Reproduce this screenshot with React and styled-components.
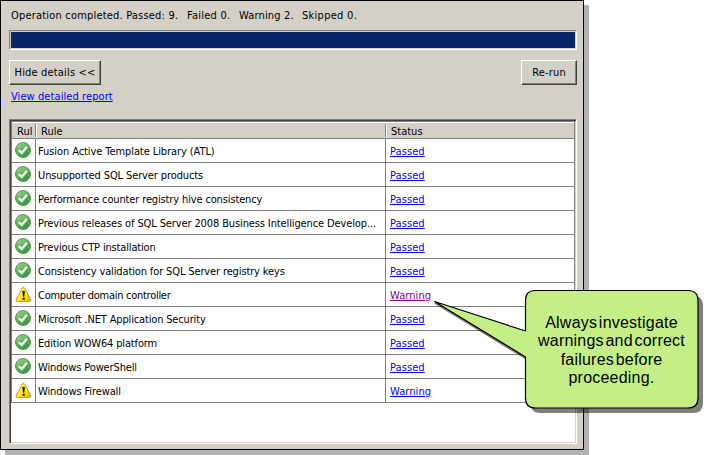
import React from 'react';
import styled, { createGlobalStyle } from 'styled-components';

const GlobalStyle = createGlobalStyle`
  * { box-sizing: border-box; }
  body { margin: 0; background: #fff; overflow: hidden; }
`;

const Page = styled.main`
  position: relative;
  width: 713px;
  height: 455px;
  font: 11px/15px "DejaVu Sans Condensed", "DejaVu Sans", sans-serif;
  color: #000;
`;

const Dialog = styled.section`
  display: flex;
  flex-direction: column;
  width: 584px;
  height: 450px;
  padding: 7px 6px 5px 8px;
  border: 1px solid #000;
  background: #d4d0c8;
  box-shadow: 5px 5px 0 #b2b2b2;
`;

const Summary = styled.div`
  display: flex;
  height: 22px;
  padding-left: 2px;
`;

const SummaryItem = styled.span`
  flex: none;
  width: ${(p) => p.$width}px;
  white-space: nowrap;
  letter-spacing: ${(p) => p.$spacing}px;
`;

const Progress = styled.div`
  height: 20px;
  padding: 1px;
  border: 1px solid;
  border-color: #808080 #fff #fff #808080;
`;

const ProgressFill = styled.div`
  height: 100%;
  background: #0a246a;
`;

const Actions = styled.div`
  display: flex;
  justify-content: space-between;
  margin-top: 10px;
`;

const Button = styled.button`
  width: ${(p) => p.$width}px;
  height: 25px;
  padding: 0 0 1px;
  border: 1px solid;
  border-color: #fff #404040 #404040 #fff;
  box-shadow: inset -1px -1px 0 #808080;
  background: #d4d0c8;
  color: #000;
  font: inherit;
  letter-spacing: 0.17px;
  white-space: nowrap;
`;

const Link = styled.a`
  color: ${(p) => (p.$visited ? '#800080' : '#0000ff')};
  letter-spacing: 0.08px;
  text-decoration: underline;
  text-decoration-thickness: 1px;
  text-underline-offset: 1px;
`;

const ReportLine = styled.div`
  height: 34px;
  padding: 4px 0 0 2px;
  letter-spacing: 0.1px;
`;

const Grid = styled.div`
  width: 568px;
  height: 325px;
  padding: 1px;
  border: 1px solid;
  border-color: #808080 #fff #fff #808080;
  background: #fff;
  box-shadow: inset 1px 1px 0 #404040, inset -1px -1px 0 #d4d0c8;
`;

const columns = '23px 350px 1fr';

const Header = styled.div`
  display: grid;
  grid-template-columns: ${columns};
  height: 18px;
  border: 1px solid #808080;
  box-shadow: inset 0 1px 0 #fff;
  background: #d4d0c8;
`;

const HeaderCell = styled.div`
  height: 13px;
  margin-top: 2px;
  padding-left: 5px;
  overflow: hidden;
  line-height: 15px;
  white-space: nowrap;
  border-left: ${(p) => (p.$divided ? '1px solid #808080' : '0')};
  box-shadow: ${(p) => (p.$divided ? 'inset 1px 0 0 #fff' : 'none')};
`;

const Row = styled.div`
  display: grid;
  grid-template-columns: ${columns};
  height: 24px;
  border: solid #808080;
  border-width: 0 1px 1px 1px;
`;

const IconCell = styled.div`
  display: flex;
  padding: 3px 0 0 3px;
`;

const Cell = styled.div`
  height: 23px;
  padding-left: ${(p) => (p.$status ? 4 : 2)}px;
  border-left: 1px solid #808080;
  line-height: 26px;
  letter-spacing: ${(p) => p.$spacing || 0}px;
  white-space: nowrap;
`;

const Callout = styled.aside`
  position: absolute;
  left: 430px;
  top: 286px;
  width: 278px;
  height: 130px;
`;

const Bubble = styled.svg`
  position: absolute;
  inset: 0;
`;

const CalloutText = styled.p`
  position: absolute;
  left: 95px;
  top: 28px;
  width: 173px;
  margin: 0;
  text-align: center;
  font: 16px/18.3px "Liberation Sans", Arial, sans-serif;
  letter-spacing: 0.22px;
  word-spacing: -3px;
`;

const Line = styled.span`
  display: block;
  white-space: nowrap;
`;

function PassedIcon() {
  return (
    <svg width="16" height="16" viewBox="0 0 16 16" aria-label="Passed">
      <defs>
        <linearGradient id="green" x1="0.1" y1="0" x2="0.7" y2="1">
          <stop offset="0" stopColor="#a9d8a0" />
          <stop offset="0.5" stopColor="#62b35d" />
          <stop offset="1" stopColor="#35943a" />
        </linearGradient>
      </defs>
      <circle cx="8" cy="8" r="7.5" fill="url(#green)" stroke="#4d8a50" strokeWidth="0.9" />
      <path d="M4 8.200 L6.700 11 L12 4.800" fill="none" stroke="#fff" strokeWidth="2.1" />
    </svg>
  );
}

function WarningIcon() {
  return (
    <svg width="17" height="17" viewBox="0 0 17 17" aria-label="Warning">
      <defs>
        <linearGradient id="yellow" x1="0" y1="0" x2="1" y2="1">
          <stop offset="0" stopColor="#fff780" />
          <stop offset="0.55" stopColor="#ffe612" />
          <stop offset="1" stopColor="#e0b000" />
        </linearGradient>
      </defs>
      <path
        d="M8.500 1.100 Q9.200 1.100 9.700 2.100 L15.800 13.600 Q16.300 15.400 15 15.500 H2 Q0.700 15.400 1.200 13.600 L7.300 2.100 Q7.800 1.100 8.500 1.100Z"
        fill="url(#yellow)"
        stroke="#b99b18"
        strokeWidth="0.9"
      />
      <path d="M7.300 5 H9.900 L9.200 10.800 H8 Z" fill="#181400" />
      <rect x="7.600" y="11.800" width="2" height="2" fill="#181400" />
    </svg>
  );
}

const summary = [
  { text: 'Operation completed. Passed: 9.', width: 176, spacing: 0.19 },
  { text: 'Failed 0.', width: 52, spacing: 0.25 },
  { text: 'Warning 2.', width: 63, spacing: 0.15 },
  { text: 'Skipped 0.', width: 60, spacing: 0.28 },
];

const rules = [
  { name: 'Fusion Active Template Library (ATL)', status: 'Passed', spacing: -0.08 },
  { name: 'Unsupported SQL Server products', status: 'Passed', spacing: -0.11 },
  { name: 'Performance counter registry hive consistency', status: 'Passed', spacing: -0.14 },
  {
    name: 'Previous releases of SQL Server 2008 Business Intelligence Develop...',
    status: 'Passed',
    spacing: -0.12,
  },
  { name: 'Previous CTP installation', status: 'Passed', spacing: -0.16 },
  { name: 'Consistency validation for SQL Server registry keys', status: 'Passed', spacing: -0.13 },
  { name: 'Computer domain controller', status: 'Warning', spacing: -0.28, visited: true },
  { name: 'Microsoft .NET Application Security', status: 'Passed', spacing: -0.16 },
  { name: 'Edition WOW64 platform', status: 'Passed', spacing: -0.16 },
  { name: 'Windows PowerShell', status: 'Passed', spacing: -0.13 },
  { name: 'Windows Firewall', status: 'Warning', spacing: -0.1 },
];

const bubblePath =
  'M105.5 4.5 H258 Q268 4.5 268 14.5 V112 Q268 122 258 122 H105.5 Q95.5 122 95.5 112 V71 L4.5 15.5 L95.5 45 V14.5 Q95.5 4.5 105.5 4.5Z';

export default function App() {
  return (
    <>
      <GlobalStyle />
      <Page>
        <Dialog>
          <Summary>
            {summary.map((s) => (
              <SummaryItem key={s.text} $width={s.width} $spacing={s.spacing}>
                {s.text}
              </SummaryItem>
            ))}
          </Summary>
          <Progress>
            <ProgressFill />
          </Progress>
          <Actions>
            <Button $width={92}>Hide details &lt;&lt;</Button>
            <Button $width={56}>Re-run</Button>
          </Actions>
          <ReportLine>
            <Link>View detailed report</Link>
          </ReportLine>
          <Grid>
            <Header>
              <HeaderCell>Rul</HeaderCell>
              <HeaderCell $divided>Rule</HeaderCell>
              <HeaderCell $divided>Status</HeaderCell>
            </Header>
            {rules.map((r) => (
              <Row key={r.name}>
                <IconCell>{r.status === 'Passed' ? <PassedIcon /> : <WarningIcon />}</IconCell>
                <Cell $spacing={r.spacing}>{r.name}</Cell>
                <Cell $status>
                  <Link $visited={r.visited}>{r.status}</Link>
                </Cell>
              </Row>
            ))}
          </Grid>
        </Dialog>
        <Callout>
          <Bubble width="278" height="130" viewBox="0 0 278 130">
            <path
              d="M110.500 9.500 H263 Q273 9.500 273 19.500 V117 Q273 127 263 127 H110.500 Q100.500 127 100.500 117 Z"
              fill="#000"
              fillOpacity="0.5"
            />
            <path d="M5 17 L96 72.500" stroke="#000" strokeOpacity="0.5" strokeWidth="2" />
            <path d={bubblePath} fill="#c3ef86" stroke="#000" strokeWidth="1.2" />
          </Bubble>
          <CalloutText>
            <Line>Always investigate</Line>
            <Line>warnings and correct</Line>
            <Line>failures before</Line>
            <Line>proceeding.</Line>
          </CalloutText>
        </Callout>
      </Page>
    </>
  );
}
